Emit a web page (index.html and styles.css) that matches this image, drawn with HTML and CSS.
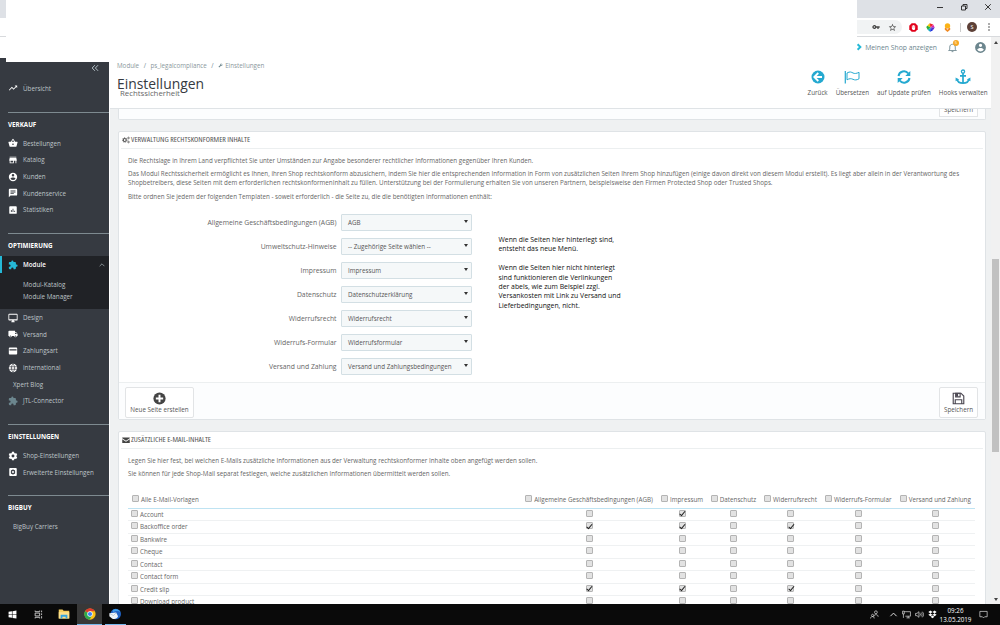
FILE: index.html
```html
<!DOCTYPE html>
<html lang="de">
<head>
    <meta charset="UTF-8">
    <title>Einstellungen</title>
    <link rel="stylesheet" href="styles.css">
</head>
<body>
    <div class="browser">
        <div class="tabs">
            <svg class="win" viewBox="0 0 10 10"><path d="M2 5.5h6"/></svg>
            <svg class="win" viewBox="0 0 10 10"><path d="M2.5 4h4v4h-4zM4 4V2.5h4v4H6.5"/></svg>
            <svg class="win" viewBox="0 0 10 10"><path d="M2.2 2.2l5.6 5.6M7.8 2.2L2.2 7.8"/></svg>
        </div>
        <div class="tools">
            <div class="omnibox">
                <svg width="8" height="8" viewBox="0 0 24 24" fill="#444"><path d="M12.65 10a6 6 0 1 0 0 4H16v4h4v-4h3v-4H12.65zM7 14a2 2 0 1 1 0-4 2 2 0 0 1 0 4z"/></svg>
                <svg width="9" height="9" viewBox="0 0 24 24" fill="#444"><path d="M22 9.24l-7.19-.62L12 2 9.19 8.63 2 9.24l5.46 4.73L5.82 21 12 17.27 18.18 21l-1.63-7.03L22 9.24zM12 15.4l-3.76 2.27 1-4.28-3.32-2.88 4.38-.38L12 6.1l1.71 4.04 4.38.38-3.32 2.88 1 4.28L12 15.4z"/></svg>
            </div>
            <svg class="ext" viewBox="0 0 10 10"><path d="M3 .3h4L9.700 3v4L7 9.700H3L.3 7V3z" fill="#e1001a"/><path d="M3.700 5V2.800M5 5V2.300M6.300 5V2.800" stroke="#fff" stroke-width="1"/><path d="M3.200 4.600h3.600V6c0 2-2.600 2.500-3.600.3z" fill="#fff"/></svg>
            <svg class="ext" viewBox="0 0 10 10"><path d="M5 5L1.500 3 4 .3z" fill="#f6c500"/><path d="M5 5L4 .3l4 1.300z" fill="#ef2a2a"/><path d="M5 5l3-3.400L9.700 5z" fill="#e021aa"/><path d="M5 5h4.700L7.500 8.200z" fill="#5a2cd0"/><path d="M5 5l2.500 3.200L4.500 9.700z" fill="#1b2be0"/><path d="M5 5l-.5 4.700L1.800 7.500z" fill="#1ba8c8"/><path d="M5 5L1.800 7.500.3 4.500 1.500 3z" fill="#2cae3a"/></svg>
            <svg class="ext" viewBox="0 0 10 10"><circle cx="5" cy="3.200" r="3" fill="#fbb316"/><path d="M2 5.500h6v2L5 9.900 2 7.500z" fill="#f08a24"/><path d="M3.500 6h3L5 7.500z" fill="#fff"/></svg>
            <i class="sep"></i>
            <span class="avatar">S</span>
            <svg class="dots" viewBox="0 0 4 12" fill="#444"><circle cx="2" cy="3" r=".8"/><circle cx="2" cy="6" r=".8"/><circle cx="2" cy="9" r=".8"/></svg>
        </div>
    </div>
    <div class="cover"></div>

    <div class="app">
        <nav class="sidebar">
            <div class="collapse"><svg viewBox="0 0 10 10"><path d="M4.800 1.500L1.500 5l3.300 3.500M8.800 1.500L5.500 5l3.300 3.500"/></svg></div>
            <a class="item first"><svg class="ico" viewBox="0 0 24 24"><path d="M16 6l2.290 2.290-4.880 4.880-4-4L2 16.590 3.410 18l6-6 4 4 6.300-6.290L22 12V6z"/></svg>Übersicht</a>

            <section>
                <h3>VERKAUF</h3>
                <a class="item"><svg class="ico" viewBox="0 0 24 24"><path d="M17.210 9l-4.380-6.560a1 1 0 0 0-1.660 0L6.790 9H2c-.6 0-1 .5-1 1l2.600 9.500c.2.900 1 1.500 1.900 1.500h13c.9 0 1.700-.6 1.900-1.500L23 10c0-.5-.5-1-1-1zM9 9l3-4.400L15 9zm3 8a2 2 0 1 1 0-4 2 2 0 0 1 0 4z"/></svg>Bestellungen</a>
                <a class="item"><svg class="ico" viewBox="0 0 24 24"><path d="M20 4H4v2h16zm1 10v-2l-1-5H4l-1 5v2h1v6h10v-6h4v6h2v-6zm-9 4H6v-4h6z"/></svg>Katalog</a>
                <a class="item"><svg class="ico" viewBox="0 0 24 24"><path d="M12 2a10 10 0 1 0 0 20 10 10 0 0 0 0-20zm0 3a3 3 0 1 1 0 6 3 3 0 0 1 0-6zm0 14.200a7.200 7.200 0 0 1-6-3.220c.03-1.990 4-3.080 6-3.080s5.970 1.090 6 3.080a7.200 7.200 0 0 1-6 3.220z"/></svg>Kunden</a>
                <a class="item"><svg class="ico" viewBox="0 0 24 24"><path d="M20 2H4a2 2 0 0 0-2 2v18l4-4h14a2 2 0 0 0 2-2V4a2 2 0 0 0-2-2zM6 9h12v2H6zm8 5H6v-2h8zm4-6H6V6h12z"/></svg>Kundenservice</a>
                <a class="item"><svg class="ico" viewBox="0 0 24 24"><path d="M19 3H5a2 2 0 0 0-2 2v14a2 2 0 0 0 2 2h14a2 2 0 0 0 2-2V5a2 2 0 0 0-2-2zM9 17H7v-5h2zm4 0h-2V9h2zm4 0h-2v-3h2z"/></svg>Statistiken</a>
            </section>

            <section>
                <h3>OPTIMIERUNG</h3>
                <div class="open">
                    <a class="item active"><svg class="ico" viewBox="0 0 24 24"><path d="M20.500 11H19V7a2 2 0 0 0-2-2h-4V3.500a2.500 2.500 0 0 0-5 0V5H4a2 2 0 0 0-2 2v3.800h1.500a2.700 2.700 0 0 1 0 5.400H2V20a2 2 0 0 0 2 2h3.800v-1.500a2.700 2.700 0 0 1 5.400 0V22H17a2 2 0 0 0 2-2v-4h1.500a2.500 2.500 0 0 0 0-5z"/></svg>Module<svg class="chev" viewBox="0 0 10 6"><path d="M1 5l4-4 4 4"/></svg></a>
                    <a class="sub">Modul-Katalog</a>
                    <a class="sub">Module Manager</a>
                </div>
                <a class="item"><svg class="ico" viewBox="0 0 24 24"><path d="M21 2H3a2 2 0 0 0-2 2v12c0 1.100.9 2 2 2h7v2H8v2h8v-2h-2v-2h7a2 2 0 0 0 2-2V4a2 2 0 0 0-2-2zm0 13H3V4h18z"/></svg>Design</a>
                <a class="item"><svg class="ico" viewBox="0 0 24 24"><path d="M20 8h-3V4H3a2 2 0 0 0-2 2v11h2a3 3 0 0 0 6 0h6a3 3 0 0 0 6 0h2v-5zM6 18.500a1.500 1.500 0 1 1 0-3 1.500 1.500 0 0 1 0 3zm13.500-9l2 2.500H17V9.500zM18 18.500a1.500 1.500 0 1 1 0-3 1.500 1.500 0 0 1 0 3z"/></svg>Versand</a>
                <a class="item"><svg class="ico" viewBox="0 0 24 24"><path fill-rule="evenodd" d="M4 3.500h16a2 2 0 0 1 2 2v13a2 2 0 0 1-2 2H4a2 2 0 0 1-2-2v-13c0-1.100.9-2 2-2zM3.500 7.500v3h17v-3z"/></svg>Zahlungsart</a>
                <a class="item"><svg class="ico" viewBox="0 0 24 24"><circle cx="12" cy="12" r="10"/><path d="M2 9h20M2 15h20M12 2c-5 5-5 15 0 20M12 2c5 5 5 15 0 20" fill="none" stroke="#363a41" stroke-width="1.600"/></svg>international</a>
                <a class="item bare">Xpert Blog</a>
                <a class="item dim"><svg class="ico" viewBox="0 0 24 24"><path d="M20.500 11H19V7a2 2 0 0 0-2-2h-4V3.500a2.500 2.500 0 0 0-5 0V5H4a2 2 0 0 0-2 2v3.800h1.500a2.700 2.700 0 0 1 0 5.400H2V20a2 2 0 0 0 2 2h3.800v-1.500a2.700 2.700 0 0 1 5.400 0V22H17a2 2 0 0 0 2-2v-4h1.500a2.500 2.500 0 0 0 0-5z"/></svg>JTL-Connector</a>
            </section>

            <section>
                <h3>EINSTELLUNGEN</h3>
                <a class="item"><svg class="ico" viewBox="0 0 24 24"><path fill-rule="evenodd" d="M9.500 2h5l.6 2.800 1.900 1.100 2.700-.9 2.500 4.300-2.200 1.800v2l2.200 1.800-2.500 4.300-2.700-.9-1.900 1.100-.6 2.800h-5l-.6-2.800L7 18.300l-2.700.9-2.500-4.300L4 13.100v-2L1.800 9.300 4.300 5l2.700.9 1.900-1.100zM12 8.500a3.500 3.500 0 1 0 0 7 3.500 3.500 0 0 0 0-7z"/></svg>Shop-Einstellungen</a>
                <a class="item"><svg class="ico" viewBox="0 0 24 24"><path fill-rule="evenodd" d="M5 2.500h14a2 2 0 0 1 2 2v15a2 2 0 0 1-2 2H5a2 2 0 0 1-2-2v-15c0-1.100.9-2 2-2zm5.500 3.500l-.5 1.800-2-.5L6.500 10 8 12l-1.500 2L8 16.700l2-.5.5 1.800h3l.5-1.800 2 .5 1.500-2.700-1.500-2 1.500-2L16 7.300l-2 .5-.5-1.800zM12 9.500a2.500 2.500 0 1 1 0 5 2.500 2.500 0 0 1 0-5z"/></svg>Erweiterte Einstellungen</a>
            </section>

            <section>
                <h3>BIGBUY</h3>
                <a class="item bare">BigBuy Carriers</a>
            </section>
        </nav>

        <main class="main">
            <header class="header">
                <div class="titles">
                    <div class="crumbs"><span>Module</span><b>/</b><span>ps_legalcompliance</span><b>/</b><svg viewBox="0 0 24 24"><path d="M2 18L11 9.500A6 6 0 0 1 18 2l-3 4 3 3 4-3a6 6 0 0 1-7.500 7L6 22z" fill="#6c868e"/></svg><span>Einstellungen</span></div>
                    <h1>Einstellungen</h1>
                    <h2>Rechtssicherheit</h2>
                </div>
                <div class="head-right">
                    <div class="shop">
                        <svg class="view" viewBox="0 0 10 10"><path d="M4.500 1.500L8 5 4.500 8.500" stroke="#25b9d7" stroke-width="2.400" fill="none"/></svg>
                        <span>Meinen Shop anzeigen</span>
                        <div class="bell"><svg viewBox="0 0 24 24" fill="none" stroke="#6c868e" stroke-width="1.900"><path d="M3.500 18.500h17L18 16v-5c0-3.500-2-6-6-6s-6 2.500-6 6v5zM10 21h4"/></svg><i>5</i></div>
                        <svg class="user" viewBox="0 0 24 24" fill="#6c868e"><path d="M12 2a10 10 0 1 0 0 20 10 10 0 0 0 0-20zm0 3a3 3 0 1 1 0 6 3 3 0 0 1 0-6zm0 14.200a7.200 7.200 0 0 1-6-3.220c.03-1.990 4-3.080 6-3.080s5.970 1.090 6 3.080a7.200 7.200 0 0 1-6 3.220z"/></svg>
                    </div>
                    <div class="actions">
                        <a><svg viewBox="0 0 16 16"><circle cx="8" cy="8" r="6.500" fill="#25a9d0"/><path d="M8.300 4L4.300 8l4 4M4.500 8h7.500" fill="none" stroke="#fff" stroke-width="1.800"/></svg>Zurück</a>
                        <a><svg viewBox="0 0 16 16" fill="none" stroke="#25a9d0"><path d="M1.300 2v12.500" stroke-width="1.200"/><path d="M3 4c3-1.800 4.500-.8 6 0s3.500.6 6-.7v6.500c-2.500 1.400-4 1.400-6 .5s-3.500-.9-6 .5z"/></svg>Übersetzen</a>
                        <a><svg viewBox="0 0 16 16" fill="none" stroke="#25a9d0" stroke-width="2"><path d="M2.500 7a5.500 5.500 0 0 1 9.800-2.500M13.500 9a5.500 5.500 0 0 1-9.800 2.500"/><path d="M14.300 2v5h-5zM1.700 14V9h5z" fill="#25a9d0" stroke="none"/></svg>auf Update prüfen</a>
                        <a><svg viewBox="0 0 16 16" fill="none" stroke="#25a9d0" stroke-width="1.700"><circle cx="8" cy="2.600" r="1.600" stroke-width="1.300"/><path d="M8 4v10M5 6.800h6M2 10c.5 2.800 3 4.200 6 4.200s5.500-1.400 6-4.200"/><path d="M.6 12.200V8.500l3.500 2zM15.400 12.200V8.500l-3.500 2z" fill="#25a9d0" stroke="none"/></svg>Hooks verwalten</a>
                    </div>
                </div>
            </header>

            <div class="content">
                <div class="panel cut"><div class="btn-cut"><span>Speichern</span></div></div>

                <div class="panel">
                    <div class="heading">
                        <svg viewBox="0 0 16 16" fill="none" stroke="#555"><circle cx="5.500" cy="8" r="3" stroke-width="2.400"/><circle cx="5.500" cy="8" r="4.700" stroke-width="1.400" stroke-dasharray="2 1.700"/><circle cx="13" cy="4" r="1.600" stroke-width="1.600"/><circle cx="13" cy="12" r="1.600" stroke-width="1.600"/></svg>
                        <span>VERWALTUNG RECHTSKONFORMER INHALTE</span>
                    </div>
                    <div class="intro">
                        <p>Die Rechtslage in Ihrem Land verpflichtet Sie unter Umständen zur Angabe besonderer rechtlicher Informationen gegenüber Ihren Kunden.</p>
                        <p>Das Modul Rechtssicherheit ermöglicht es Ihnen, ihren Shop rechtskonform abzusichern, indem Sie hier die entsprechenden Information in Form von zusätzlichen Seiten Ihrem Shop hinzufügen (einige davon direkt von diesem Modul erstellt). Es liegt aber allein in der Verantwortung des<br>Shopbetreibers, diese Seiten mit dem erforderlichen rechtskonformenInhalt zu füllen. Unterstützung bei der Formulierung erhalten Sie von unseren Partnern, beispielsweise den Firmen Protected Shop oder Trusted Shops.</p>
                        <p>Bitte ordnen Sie jedem der folgenden Templaten - soweit erforderlich - die Seite zu, die die benötigten Informationen enthält:</p>
                    </div>
                    <div class="form">
                        <div class="fields">
                            <label>Allgemeine Geschäftsbedingungen (AGB)</label><div class="select">AGB</div>
                            <label>Umweltschutz-Hinweise</label><div class="select">-- Zugehörige Seite wählen --</div>
                            <label>Impressum</label><div class="select">Impressum</div>
                            <label>Datenschutz</label><div class="select">Datenschutzerklärung</div>
                            <label>Widerrufsrecht</label><div class="select">Widerrufsrecht</div>
                            <label>Widerrufs-Formular</label><div class="select">Widerrufsformular</div>
                            <label>Versand und Zahlung</label><div class="select">Versand und Zahlungsbedingungen</div>
                        </div>
                        <div class="note">
                            Wenn die Seiten hier hinterlegt sind,<br>entsteht das neue Menü.<br><br>
                            Wenn die Seiten hier nicht hinterlegt<br>sind funktionieren die Verlinkungen<br>der abels, wie zum Beispiel zzgl.<br>Versankosten mit Link zu Versand und<br>Lieferbedingungen, nicht.
                        </div>
                    </div>
                    <div class="footer">
                        <a class="btn"><svg viewBox="0 0 16 16"><circle cx="8" cy="8" r="7.500" fill="#444"/><path d="M8 3.500v9M3.500 8h9" stroke="#fff" stroke-width="2.400"/></svg>Neue Seite erstellen</a>
                        <a class="btn save"><svg viewBox="0 0 16 16" fill="none" stroke="#4a4650" stroke-width="1.400"><path d="M1.500 1.500h9.500l3.500 3.500v9.500h-13zM4 14.500V9.500h8v5"/><path d="M4.500 1.500h5.500V6H4.500z"/><path d="M5 2h2.500v3.500H5z" fill="#4a4650" stroke="none"/></svg>Speichern</a>
                    </div>
                </div>

                <div class="panel mails">
                    <div class="heading">
                        <svg viewBox="0 0 16 16" fill="#444"><path d="M.5 3h15v1.500L8 9.500.5 4.500zM.5 6.500L8 11.500l7.500-5V14H.5z"/></svg>
                        <span>ZUSÄTZLICHE E-MAIL-INHALTE</span>
                    </div>
                    <div class="intro">
                        <p>Legen Sie hier fest, bei welchen E-Mails zusätzliche Informationen aus der Verwaltung rechtskonformer Inhalte oben angefügt werden sollen.</p>
                        <p>Sie können für jede Shop-Mail separat festlegen, welche zusätzlichen Informationen übermittelt werden sollen.</p>
                    </div>
                    <div class="table" id="mails">
                        <div class="row thead">
                            <div><input type="checkbox">Alle E-Mail-Vorlagen</div>
                            <div><input type="checkbox">Allgemeine Geschäftsbedingungen (AGB)</div>
                            <div><input type="checkbox">Impressum</div>
                            <div><input type="checkbox">Datenschutz</div>
                            <div><input type="checkbox">Widerrufsrecht</div>
                            <div><input type="checkbox">Widerrufs-Formular</div>
                            <div><input type="checkbox">Versand und Zahlung</div>
                        </div>
                    </div>
                </div>
            </div>
        </main>

        <div class="scrollbar"><i class="up"></i><div class="thumb"></div><i class="down"></i></div>
    </div>

    <div class="taskbar">
        <div class="task"><svg viewBox="0 0 16 16" fill="#fff"><path d="M1 3l6-.8v5.300H1zM8 2l7-1v6.500H8zM1 8.500h6v5.300L1 13zM8 8.500h7V15l-7-1z"/></svg></div>
        <div class="task"><svg viewBox="0 0 16 16" fill="none" stroke="#ddd" stroke-width="1.500"><path d="M2 1v2h8V1M2 5.500h8v5H2zM2 15v-2h8v2M13.500 1v3M13.500 6v3M13.500 11v4"/></svg></div>
        <div class="task"><svg class="big" viewBox="0 0 16 16"><path d="M1 2h5l1.500 1.500H15V14H1z" fill="#f6cf5e"/><path d="M1 5.500h14V14H1z" fill="#fde08a"/><path d="M3.500 14V9h9v5h-2.300v-2.500H5.800V14z" fill="#35a4e0"/></svg></div>
        <div class="task on"><svg class="big" viewBox="0 0 16 16"><circle cx="8" cy="8" r="7.500" fill="#fbc116"/><path d="M8 8L1.500 4.200A7.500 7.500 0 0 1 14.500 4.300H8z" fill="#e23b2e"/><path d="M1.500 4.200A7.500 7.500 0 0 0 7.500 15.500L10.500 10 8 8z" fill="#2da94f"/><circle cx="8" cy="8" r="3.600" fill="#fff"/><circle cx="8" cy="8" r="2.800" fill="#4084f3"/></svg></div>
        <div class="task run"><svg class="big" viewBox="0 0 16 16"><circle cx="9" cy="8" r="7" fill="#1f62c4"/><path d="M5 2.500A7 7 0 0 1 15.500 6c-3-2.500-6-2.500-10-.5z" fill="#3d9be8"/><path d="M.5 7l9-1 2.500 5c-1 3.500-5 4.500-8 3L.5 11z" fill="#eef3f8"/><path d="M1 7.500l5 2.500 3.500-3.500" fill="none" stroke="#9fb4c8" stroke-width=".8"/></svg></div>
        <div class="tray">
            <svg viewBox="0 0 16 16"><circle cx="10.500" cy="4" r="2.500"/><path d="M6.500 12c0-5 8-5 8 0M4.500 7.500a2 2 0 1 0 .1 0M1 15c0-4.500 6.500-4.500 6.500 0"/></svg>
            <svg class="t2" viewBox="0 0 16 16"><path d="M2.500 11L8 5.500l5.500 5.500" stroke-width="1.700"/></svg>
            <svg class="t3" viewBox="0 0 16 16"><path d="M4 3h11v8H6M8 14h6M11 11v3M1 2v5h3V2zM2.500 7v7"/></svg>
            <svg class="t4" viewBox="0 0 16 16"><path d="M1 6h2.500L7 3v10L3.500 10H1zM9 6c1 1.500 1 2.500 0 4M11 4.500c2 2.500 2 4.500 0 7M13 3c3 3.500 3 6.500 0 10"/></svg>
            <svg class="t5" viewBox="0 0 16 16"><path d="M4.300 1L8 3.500 4.300 6 .6 3.500zM11.700 1l3.700 2.500L11.700 6 8 3.500zM4.300 6L8 8.500 4.300 11 .6 8.500zM11.700 6l3.700 2.500-3.700 2.500L8 8.500zM8 9.700l3.500 2.500L8 14.700l-3.500-2.500z" fill="#fff" stroke="none"/></svg>
            <div class="clock"><span>09:26</span><span>13.05.2019</span></div>
            <svg class="t6" viewBox="0 0 16 16"><path d="M1.500 2.500h13v9.500H10l-2 2-2-2H1.500z"/></svg>
        </div>
    </div>

    <script>
        // one string per mail template, 1 = checked
        const mails = [
            ["Account", "010000"],
            ["Backoffice order", "110100"],
            ["Bankwire", "000000"],
            ["Cheque", "000000"],
            ["Contact", "000000"],
            ["Contact form", "000000"],
            ["Credit slip", "110100"],
            ["Download product", "000000"]
        ];
        const table = document.getElementById("mails");
        mails.forEach(([name, flags]) => {
            const cells = [...flags].map(f => `<div><input type="checkbox"${f === "1" ? " checked" : ""}></div>`).join("");
            table.insertAdjacentHTML("beforeend", `<div class="row"><div><input type="checkbox">${name}</div>${cells}</div>`);
        });
    </script>
</body>
</html>
```
FILE: styles.css
```css
* {
    box-sizing: border-box;
}
body {
    margin: 0;
    width: 1000px;
    height: 625px;
    overflow: hidden;
    display: flex;
    flex-direction: column;
    background: #fff;
    font-family: "Open Sans", "Noto Sans", sans-serif;
    font-size: 6.25px;
    line-height: 9px;
    color: #666;
    position: relative;
}
h1, h2, h3, p {
    margin: 0;
    font-weight: normal;
}
svg {
    display: block;
    flex: none;
}

/* browser window */
.browser {
    height: 37px;
    flex: none;
    border-bottom: 1px solid #d8dadd;
}
.tabs {
    height: 18px;
    background: #dee1e6;
    display: flex;
    justify-content: flex-end;
    gap: 14px;
    padding: 2px 7px 0 0;
}
.win {
    width: 10px;
    height: 10px;
    fill: none;
    stroke: #222;
    stroke-width: 0.9;
}
.tools {
    height: 18px;
    display: flex;
    align-items: center;
    justify-content: flex-end;
    padding-right: 9px;
}
.omnibox {
    width: 60px;
    height: 14px;
    border-radius: 0 7px 7px 0;
    background: #f1f3f4;
    display: flex;
    align-items: center;
    justify-content: flex-end;
    gap: 8px;
    padding-right: 5px;
    margin-right: 7px;
}
.ext {
    width: 9px;
    height: 9px;
    margin-right: 8px;
}
.sep {
    width: 1px;
    height: 9px;
    background: #ccc;
    margin-right: 6px;
}
.avatar {
    width: 10px;
    height: 10px;
    border-radius: 50%;
    background: #5d4037;
    color: #fff;
    font-size: 5.5px;
    line-height: 10px;
    text-align: center;
    margin-right: 10px;
}
.dots {
    width: 4px;
    height: 12px;
}
.cover {
    position: absolute;
    left: 6px;
    top: 0;
    width: 851px;
    height: 62px;
    background: #fff;
}

.app {
    display: flex;
    height: 567px;
    flex: none;
}

/* sidebar */
.sidebar {
    width: 109px;
    margin-top: 21px;
    background: #363a41;
    flex: none;
}
.collapse {
    height: 22px;
    padding: 6px 10px 0 0;
    display: flex;
    justify-content: flex-end;
}
.collapse svg {
    width: 8px;
    height: 8px;
    fill: none;
    stroke: #c5d3d8;
    stroke-width: 1.1;
}
.item {
    display: flex;
    align-items: center;
    height: 16.67px;
    padding-left: 8px;
    color: #bec4c8;
}
.item.first {
    margin-bottom: 15.3px;
}
.ico {
    width: 10px;
    height: 10px;
    margin-right: 5px;
    fill: #fff;
}
.item.bare {
    padding-left: 13px;
}
.item.dim .ico {
    fill: #6c868e;
}
.sidebar section {
    padding-bottom: 15px;
}
.sidebar section::before {
    content: "";
    display: block;
    height: 1px;
    margin-left: 8px;
    background: #7e8a90;
}
.sidebar h3 {
    height: 22px;
    line-height: 23.4px;
    padding-left: 8px;
    font-size: 6.25px;
    font-weight: bold;
    color: #fff;
}
.open {
    background: #202226;
    height: 53px;
}
.item.active {
    border-left: 2px solid #25b9d7;
    padding-left: 6px;
    color: #fff;
    font-weight: 600;
    margin-bottom: 5.8px;
}
.item.active .ico {
    fill: #25b9d7;
}
.chev {
    width: 6px;
    height: 4px;
    margin: 0 4px 0 auto;
    fill: none;
    stroke: #a8b3b8;
    stroke-width: 1.2;
}
.sub {
    display: block;
    height: 12.4px;
    line-height: 12.4px;
    padding-left: 23px;
    color: #bec4c8;
}

/* page header */
.main {
    width: 882px;
    display: flex;
    flex-direction: column;
    overflow: hidden;
    background: #eff1f2;
    border-left: 1px solid #fff;
}
.header {
    height: 72px;
    flex: none;
    display: flex;
    justify-content: space-between;
    background: #fff;
    border-bottom: 1px solid #dfe3e6;
}
.titles {
    padding: 23px 0 0 7px;
}
.crumbs {
    display: flex;
    align-items: center;
    height: 10px;
    color: #8a979c;
}
.crumbs b {
    font-weight: normal;
    color: #6c868e;
    margin: 0 4.5px;
}
.crumbs svg {
    width: 5px;
    height: 5px;
    margin-right: 2px;
}
.titles h1 {
    font-size: 13.9px;
    line-height: 17px;
    margin-top: 5px;
    color: #363a41;
}
.titles h2 {
    font-size: 7.8px;
    line-height: 9px;
    margin: -3px 0 0 3px;
    color: #666;
}
.head-right {
    padding-top: 3px;
}
.shop {
    display: flex;
    align-items: center;
    justify-content: flex-end;
    height: 14px;
    padding-right: 4.5px;
    font-size: 6.8px;
    color: #6c868e;
}
.view {
    width: 8px;
    height: 8px;
    margin-right: 3px;
}
.bell {
    position: relative;
    margin: 0 15.5px 0 10px;
}
.bell svg {
    width: 11px;
    height: 11px;
}
.bell i {
    position: absolute;
    left: 6px;
    top: -2px;
    width: 6px;
    height: 6px;
    border-radius: 50%;
    background: #f7a823;
    color: #fff;
    font-style: normal;
    font-size: 4px;
    line-height: 6px;
    text-align: center;
}
.user {
    width: 13px;
    height: 13px;
}
.actions {
    display: flex;
    justify-content: flex-end;
    gap: 8px;
    padding: 15px 3.5px 0 0;
    color: #555;
}
.actions a {
    display: flex;
    flex-direction: column;
    align-items: center;
    gap: 3px;
}
.actions svg {
    width: 16px;
    height: 16px;
}

/* panels */
.content {
    padding: 0 5px 0 8px;
}
.panel {
    height: 289px;
    margin-bottom: 11px;
    background: #fff;
    border: 1px solid #dfe3e6;
    border-radius: 2px;
    display: flex;
    flex-direction: column;
}
.panel.cut {
    height: 11px;
    border-top: 0;
    border-radius: 0 0 2px 2px;
    background: #fcfdfe;
    padding-right: 7px;
    align-items: flex-end;
}
.btn-cut {
    width: 39px;
    height: 8px;
    border: 1px solid #e2e4e6;
    border-top: 0;
    background: #fff;
    overflow: hidden;
    text-align: center;
    color: #555;
}
.btn-cut span {
    display: block;
    margin-top: -4px;
}
.heading {
    display: flex;
    align-items: center;
    height: 17px;
    margin: 0 2px;
    padding: 0 0 1px 1px;
    border-bottom: 1px solid #eceff0;
    color: #555;
    font-size: 7.85px;
    font-stretch: 75%;
    white-space: nowrap;
}
.heading svg {
    width: 8px;
    height: 8px;
    margin-right: 1px;
}
.intro {
    padding: 7px 9px 0;
    white-space: nowrap;
}
.intro p {
    margin-bottom: 4.3px;
}
.form {
    display: flex;
    padding-top: 9px;
}
.fields {
    width: 353px;
    display: grid;
    grid-template-columns: 217.5px 131px;
    grid-auto-rows: 17px;
    gap: 7px 4.5px;
    align-items: center;
    font-size: 6.8px;
}
.fields label {
    text-align: right;
    white-space: nowrap;
}
.select {
    height: 17px;
    border: 1px solid #d3dfe4;
    border-radius: 1px;
    background: #f5f8f9;
    padding: 0 3px 0 6px;
    display: flex;
    align-items: center;
    justify-content: space-between;
    color: #555;
    font-size: 6.25px;
}
.select::after {
    content: "";
    border: 2px solid transparent;
    border-top: 3px solid #333;
    border-bottom: 0;
    margin-top: -2px;
}
.note {
    margin: 21px 0 0 26.5px;
    font-size: 6.85px;
    line-height: 9.4px;
    color: #111;
    white-space: nowrap;
}
.footer {
    margin-top: auto;
    height: 37px;
    border-top: 1px solid #eceff0;
    background: #fcfdfe;
    display: flex;
    justify-content: space-between;
    padding: 4px 7px 0 6px;
}
.btn {
    width: 69px;
    height: 31px;
    border: 1px solid #e2e4e6;
    border-radius: 2px;
    background: #fff;
    color: #555;
    display: flex;
    flex-direction: column;
    align-items: center;
    padding-top: 4px;
    white-space: nowrap;
}
.btn svg {
    width: 13px;
    height: 13px;
}
.btn.save {
    width: 39px;
}

/* mail table */
.mails {
    height: 300px;
}
.table {
    margin: 8px 10px 0 9px;
}
.row {
    display: grid;
    grid-template-columns: 393px 136px 50px 53px 61px 74.5px 79.5px;
    height: 12.5px;
    align-items: center;
    border-bottom: 1px solid #eff1f2;
    white-space: nowrap;
}
.row div {
    display: flex;
    align-items: center;
    justify-content: center;
}
.row div:first-child {
    justify-content: flex-start;
    padding-left: 3px;
}
.row.thead {
    height: 18px;
    border-bottom-color: #bfe3f2;
}
.row.thead div:first-child {
    padding-left: 4px;
}
input {
    appearance: none;
    flex: none;
    width: 7px;
    height: 7px;
    margin: 0;
    border: 1px solid #b4b4b4;
    border-radius: 1px;
    background: #e2e2e2;
    position: relative;
    top: -1px;
}
.row div:first-child input,
.thead input {
    margin-right: 2px;
}
input:checked::after {
    content: "";
    position: absolute;
    left: 1.5px;
    top: -0.5px;
    width: 2.2px;
    height: 4.5px;
    border: solid #222;
    border-width: 0 1.2px 1.2px 0;
    transform: rotate(40deg);
}

/* page scrollbar */
.scrollbar {
    width: 9px;
    background: #f1f1f1;
    display: flex;
    flex-direction: column;
    align-items: center;
    padding: 4px 0 3px;
}
.scrollbar i {
    border: 2px solid transparent;
}
.scrollbar .up {
    border-top: 0;
    border-bottom: 3px solid #444;
}
.scrollbar .down {
    border-bottom: 0;
    border-top: 3px solid #444;
    margin-top: auto;
}
.thumb {
    width: 7px;
    height: 193px;
    margin-top: 215px;
    background: #c1c1c1;
}

/* windows taskbar */
.taskbar {
    height: 21px;
    display: flex;
    background: #0a0a0a;
    position: relative;
}
.task {
    width: 25px;
    margin-right: 0.7px;
    display: flex;
    align-items: center;
    justify-content: center;
    border-bottom: 1px solid transparent;
}
.task svg {
    width: 9px;
    height: 9px;
}
.task svg.big {
    width: 12px;
    height: 12px;
}
.task.on {
    background: #383838;
    border-bottom-color: #76b9ed;
}
.task.run {
    width: 21px;
    margin-left: 2px;
    border-bottom-color: #76b9ed;
}
.tray {
    margin-left: auto;
    display: flex;
    align-items: center;
    padding-right: 12.5px;
    color: #fff;
}
.tray svg {
    width: 9px;
    height: 9px;
    fill: none;
    stroke: #e8e8e8;
    stroke-width: 1.2;
    margin-right: 10px;
}
.tray .t2, .tray .t3, .tray .t4 {
    margin-right: 4px;
}
.tray .t5 {
    margin-right: 5px;
}
.tray .t6 {
    margin: 0 0 0 9px;
}
.clock {
    display: flex;
    flex-direction: column;
    align-items: center;
    width: 28px;
}
```
